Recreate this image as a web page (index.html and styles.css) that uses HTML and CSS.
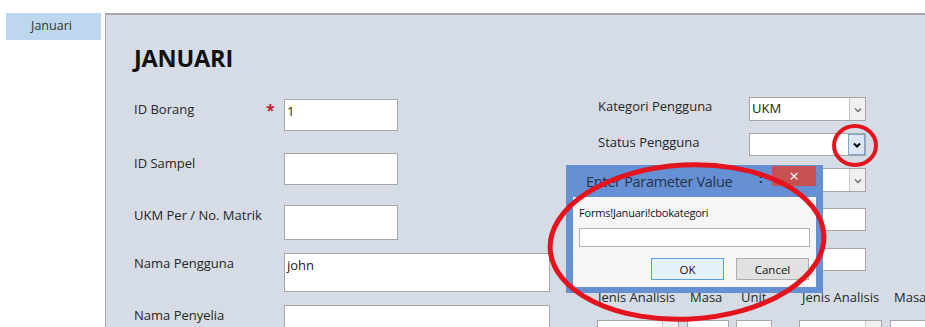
FILE: index.html
```html
<!DOCTYPE html>
<html lang="ms">
  <head>
    <meta charset="UTF-8" />
    <meta name="viewport" content="width=device-width, initial-scale=1.0" />
    <title>Januari</title>
    <link rel="stylesheet" href="styles.css">
  </head>
  <body>
    <div class="page">
      <div class="nav">
        <div class="tab">Januari</div>
      </div>

      <div class="form">
        <h1>JANUARI</h1>

        <div class="form-body">
          <div class="col-left">
            <div class="row row-1">
              <label>ID Borang</label>
              <span class="req">*</span>
              <div class="box box-sm">1</div>
            </div>
            <div class="row row-2">
              <label>ID Sampel</label>
              <div class="box box-sm"></div>
            </div>
            <div class="row row-3">
              <label>UKM Per / No. Matrik</label>
              <div class="box box-sm tall"></div>
            </div>
            <div class="row row-4">
              <label>Nama Pengguna</label>
              <div class="box box-lg taller">john</div>
            </div>
            <div class="row row-5">
              <label>Nama Penyelia</label>
              <div class="box box-lg taller"></div>
            </div>
          </div>

          <div class="col-right">
            <div class="rrow rrow-1">
              <label>Kategori Pengguna</label>
              <div class="combo">
                <span class="combo-text">UKM</span>
                <span class="drop"><svg width="8" height="6" viewBox="0 0 8 6"><path d="M1 1.5 L4 4.5 L7 1.5" fill="none" stroke="currentColor" stroke-width="1.5" /></svg></span>
              </div>
            </div>
            <div class="rrow rrow-2">
              <label>Status Pengguna</label>
              <div class="combo">
                <span class="combo-text"></span>
                <span class="drop active"><svg width="8" height="6" viewBox="0 0 8 6"><path d="M1 1.5 L4 4.5 L7 1.5" fill="none" stroke="currentColor" stroke-width="2" /></svg></span>
              </div>
            </div>
            <div class="rrow rrow-3">
              <label></label>
              <div class="combo">
                <span class="combo-text"></span>
                <span class="drop"><svg width="8" height="6" viewBox="0 0 8 6"><path d="M1 1.5 L4 4.5 L7 1.5" fill="none" stroke="currentColor" stroke-width="1.5" /></svg></span>
              </div>
            </div>
            <div class="rrow rrow-4">
              <label></label>
              <div class="box combo-w"></div>
            </div>
            <div class="rrow rrow-5">
              <label></label>
              <div class="box combo-w"></div>
            </div>

            <div class="grid-head">
              <span>Jenis Analisis</span>
              <span>Masa</span>
              <span>Unit</span>
              <span>Jenis Analisis</span>
              <span>Masa</span>
            </div>
            <div class="grid-inputs">
              <div class="mini-combo"><span class="drop"></span></div>
              <div class="box mini masa"></div>
              <div class="box mini unit"></div>
              <div class="mini-combo second"><span class="drop"></span></div>
              <div class="box mini masa"></div>
            </div>
          </div>
        </div>
      </div>
    </div>

    <div class="dialog">
      <div class="dialog-title">
        <span>Enter Parameter Value</span>
        <span class="help">:</span>
        <span class="close">&#215;</span>
      </div>
      <div class="dialog-body">
        <p>Forms!Januari!cbokategori</p>
        <div class="dialog-input"></div>
        <div class="dialog-buttons">
          <button class="dbtn ok">OK</button>
          <button class="dbtn">Cancel</button>
        </div>
      </div>
    </div>

    <svg class="marks" width="925" height="327" viewBox="0 0 925 327">
      <ellipse cx="855" cy="145.5" rx="21" ry="19.5" fill="none" stroke="#e3141e" stroke-width="4" />
      <ellipse cx="687" cy="242" rx="137" ry="77" fill="none" stroke="#e3141e" stroke-width="5" transform="rotate(-3 687 242)" />
    </svg>
  </body>
</html>
```

FILE: styles.css
```css
body {
  margin: 0;
  font-family: "Open Sans", "Liberation Sans", sans-serif;
  background: #ffffff;
  color: #262626;
  position: relative;
  width: 925px;
  height: 327px;
  overflow: hidden;
}
.page {
  display: flex;
  padding-top: 13px;
  height: 314px;
}
.nav {
  width: 95px;
  margin-left: 6px;
}
.tab {
  background: #bdd7ee;
  height: 27px;
  line-height: 26px;
  text-align: center;
  font-size: 12.5px;
  color: #333;
  padding-right: 4px;
}
.form {
  flex: 1;
  margin-left: 4px;
  background: #d6dce5;
  border-top: 2px solid #a3a6aa;
  border-left: 1px solid #a6a6a6;
  padding-left: 28px;
  overflow: hidden;
}
h1 {
  margin: 0;
  padding-top: 27px;
  font-size: 23.5px;
  line-height: 32px;
  font-weight: 700;
  color: #111;
  letter-spacing: -0.2px;
}
.form-body {
  display: flex;
  gap: 48px;
  margin-top: 23px;
}
.col-left {
  width: 416px;
  flex-shrink: 0;
}
label {
  font-size: 13px;
  line-height: 18px;
}
.row {
  display: flex;
  align-items: flex-start;
  position: relative;
}
.row label {
  width: 150px;
  padding-top: 1px;
}
.row-1 { margin-top: 2px; }
.row-2 { margin-top: 22px; }
.row-3 { margin-top: 20px; }
.row-4 { margin-top: 13px; }
.row-5 { margin-top: 13px; }
.req {
  position: absolute;
  left: 132px;
  top: 0;
  color: #c0202a;
  font-size: 16px;
  font-weight: 700;
}
.box {
  background: #ffffff;
  border: 1px solid #a6a6a6;
  box-sizing: border-box;
  font-size: 13px;
  line-height: 18px;
  padding: 2px 2px;
  color: #222;
}
.box-sm {
  width: 114px;
  height: 32px;
}
.tall {
  height: 35px;
}
.box-lg {
  width: 266px;
  height: 39px;
  padding-top: 2px;
}
.col-right {
  flex-shrink: 0;
  width: 340px;
}
.rrow {
  display: flex;
  align-items: flex-start;
}
.rrow label {
  width: 151px;
  flex-shrink: 0;
  min-height: 18px;
}
.rrow-1 { margin-top: 0; }
.rrow-2 { margin-top: 12px; }
.rrow-3 { margin-top: 12px; }
.rrow-4 { margin-top: 16px; }
.rrow-5 { margin-top: 17px; }
.combo {
  display: flex;
  width: 117px;
  height: 24px;
  background: #fff;
  border: 1px solid #a6a6a6;
  box-sizing: border-box;
}
.rrow-2 .combo {
  height: 23px;
}
.combo-text {
  flex: 1;
  font-size: 13px;
  line-height: 21px;
  padding-left: 2px;
  color: #222;
}
.drop {
  width: 15px;
  background: #f0f0f0;
  border-left: 1px solid #c4c4c4;
  color: #707070;
  display: flex;
  align-items: center;
  justify-content: center;
  padding-top: 1px;
}
.drop.active {
  background: #dce8f6;
  border: 1px solid #7fa6d3;
  color: #000;
}
.combo-w {
  width: 117px;
  height: 23px;
}
.grid-head {
  display: flex;
  margin-top: 17px;
  font-size: 13px;
  line-height: 18px;
  white-space: nowrap;
}
.grid-head span:nth-child(1) { width: 92px; }
.grid-head span:nth-child(2) { width: 51px; }
.grid-head span:nth-child(3) { width: 61px; }
.grid-head span:nth-child(4) { width: 92px; }
.grid-inputs {
  display: flex;
  margin-top: 14px;
  margin-left: -1px;
}
.mini-combo {
  width: 84px;
  height: 22px;
  background: #fff;
  border: 1px solid #a6a6a6;
  box-sizing: border-box;
  display: flex;
  justify-content: flex-end;
  margin-right: 8px;
}
.mini-combo .drop {
  width: 15px;
}
.mini {
  height: 22px;
}
.masa {
  width: 42px;
  margin-right: 7px;
}
.unit {
  width: 37px;
  margin-right: 27px;
}

/* dialog */
.dialog {
  position: absolute;
  left: 566px;
  top: 165px;
  width: 257px;
  height: 128px;
  background: #6690d4;
  box-sizing: border-box;
  padding: 0 7px 6px 7px;
  display: flex;
  flex-direction: column;
}
.dialog-title {
  height: 32px;
  position: relative;
  font-size: 14.5px;
  letter-spacing: -0.3px;
  line-height: 34px;
  color: #24324a;
  padding-left: 13px;
}
.help {
  position: absolute;
  left: 186px;
  top: -4px;
  font-weight: 700;
  font-size: 13px;
  color: #1d2a40;
}
.close {
  position: absolute;
  left: 199px;
  top: 1px;
  width: 44px;
  height: 20px;
  background: #c75050;
  color: #fff;
  font-size: 17px;
  line-height: 19px;
  text-align: center;
}
.dialog-body {
  flex: 1;
  background: #f6f6f6;
  padding: 0 7px 0 6px;
}
.dialog-body p {
  margin: 8px 0 0;
  font-size: 11px;
  letter-spacing: -0.2px;
  line-height: 16px;
  color: #111;
}
.dialog-input {
  margin-top: 7px;
  width: 231px;
  height: 19px;
  background: #fff;
  border: 1px solid #b4b4b4;
  box-sizing: border-box;
}
.dialog-buttons {
  display: flex;
  justify-content: flex-end;
  gap: 12px;
  margin-top: 11px;
}
.dbtn {
  width: 73px;
  height: 22px;
  font-family: "Open Sans", "Liberation Sans", sans-serif;
  font-size: 11.5px;
  background: #e1e1e1;
  border: 1px solid #adadad;
  color: #111;
  padding: 0;
}
.dbtn.ok {
  background: #e5f1fb;
  border-color: #5aa0e6;
}
.marks {
  position: absolute;
  left: 0;
  top: 0;
  pointer-events: none;
}
```
